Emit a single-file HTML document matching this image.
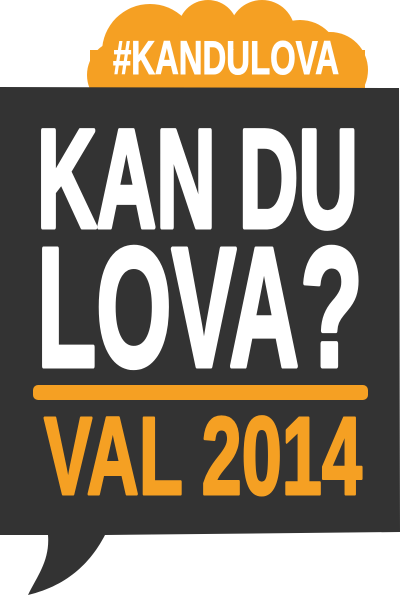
<!DOCTYPE html>
<html><head><meta charset="utf-8"><style>html,body{margin:0;padding:0;background:#fff;width:400px;height:596px;overflow:hidden}</style></head>
<body>
<svg width="400" height="596" viewBox="0 0 400 596" xmlns="http://www.w3.org/2000/svg">
<g fill="#F5A023">
<circle cx="122" cy="75" r="35"/>
<circle cx="150" cy="52" r="48"/>
<circle cx="208" cy="30" r="30"/>
<circle cx="262" cy="33" r="33"/>
<circle cx="300" cy="60" r="40"/>
<circle cx="330" cy="70" r="38"/>
<rect x="90" y="50" width="275" height="40"/>
</g>
<path d="M0 87 L399 88 L400 532 L105 535 C92 560 70 585 28 595 C38 575 50 560 48 535 L0 535 Z" fill="#333333"/>
<g font-family="'Liberation Sans Narrow','Liberation Sans',sans-serif" font-weight="bold">
<text x="113" y="74" font-size="47" fill="#fff" stroke="#fff" stroke-width="1" textLength="226" lengthAdjust="spacingAndGlyphs">#KANDULOVA</text>
<text x="37" y="227" font-size="140" fill="#fff" stroke="#fff" stroke-width="5" stroke-linejoin="round" textLength="321" lengthAdjust="spacingAndGlyphs">KAN DU</text>
<text x="37" y="366" font-size="170" fill="#fff" stroke="#fff" stroke-width="5" stroke-linejoin="round" textLength="262" lengthAdjust="spacingAndGlyphs">LOVA</text>
<text x="300" y="366" font-size="170" fill="#fff" stroke="#fff" stroke-width="5" stroke-linejoin="round" textLength="63" lengthAdjust="spacingAndGlyphs">?</text>
<text x="44" y="494" font-size="110" fill="#F5A023" stroke="#F5A023" stroke-width="3" stroke-linejoin="round" textLength="318" lengthAdjust="spacingAndGlyphs">VAL 2014</text>
</g>
<rect x="33" y="385" width="335" height="15" rx="5" fill="#F5A023"/>
</svg>
</body></html>
